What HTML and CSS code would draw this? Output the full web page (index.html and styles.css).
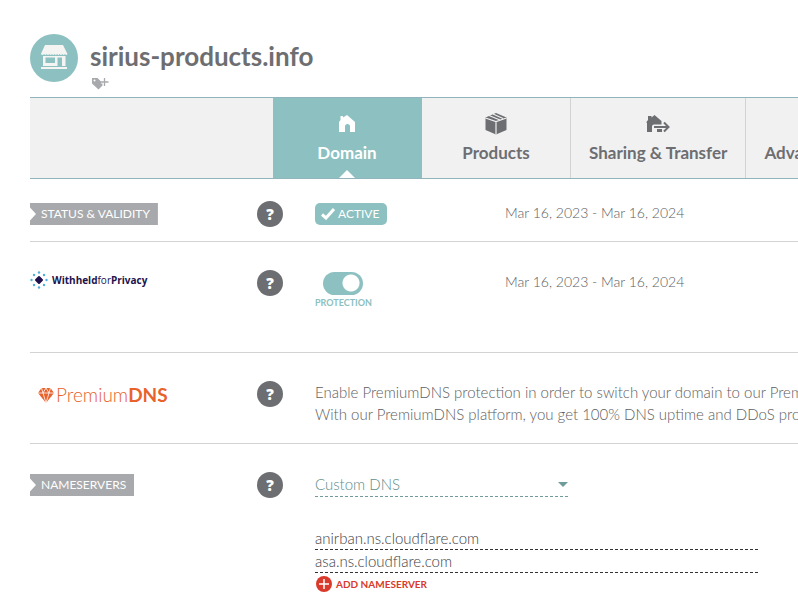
FILE: index.html
```html
<!DOCTYPE html>
<html lang="en">
<head>
  <meta charset="utf-8">
  <title>sirius-products.info</title>
  <link rel="stylesheet" href="styles.css">
</head>
<body>
  <div class="page">
    <header class="domain-header">
      <svg class="store" viewBox="0 0 48 48" width="48" height="48">
        <circle cx="24" cy="24" r="24" fill="#8dc0c0"/>
        <path fill="#f4f4f2" d="M15 11h18l4.500 9q-1.300 2-2.600 0-1.300 2-2.600 0-1.300 2-2.600 0-1.300 2-2.600 0-1.300 2-2.600 0-1.300 2-2.600 0-1.300 2-2.600 0-1.300 2-2.600 0-1.300 2-2.600 0-1.300 2-3.200 0z"/>
        <path fill="#f4f4f2" fill-rule="evenodd" d="M13 22h22.500v10H13zM15.500 23.500v5.500H25v-5.500zM27.500 23.500V32H32v-8.500z"/>
        <path fill="#f4f4f2" d="M11 33h26v2H11z"/>
      </svg>
      <div>
        <h1>sirius-products.info</h1>
        <button class="tag-button" type="button" aria-label="Add tag">
          <svg viewBox="0 0 17 12" width="17" height="12">
            <path fill="#a7a9ac" fill-rule="evenodd" d="M0 0h5.500L10.500 5v2.500l-4 4L0 5.500zM2.500 1.500a1 1 0 1 0 0 2 1 1 0 1 0 0-2z"/>
            <path stroke="#fff" stroke-width="3" d="M12.500 0v8M9 4h7"/>
            <path stroke="#a7a9ac" stroke-width="1.300" d="M12.500 0v8M8.500 4H16.500"/>
          </svg>
        </button>
      </div>
    </header>

    <nav class="tabs">
      <a class="tab active" href="#domain">
        <svg viewBox="0 0 24 24" width="24" height="24"><path fill="#fff" d="M4 20V10l1.500-2V4H8v1.500L12 3l8 7v10h-5v-5.500q0-2.500-2.500-2.500T10 14.500V20z"/></svg>
        Domain
      </a>
      <a class="tab" href="#products">
        <svg viewBox="0 0 24 24" width="24" height="24">
          <path fill="#6d6e71" d="M1.500 5.500L12 1l10.500 4.500v12.500L12 22.500 1.500 18z"/>
          <path fill="none" stroke="#f1f1f1" stroke-width="1.200" d="M1.500 6L12 9.500 22.500 6M12 9.500v13M5 3.500l11 4.500M9 2l10 4.500"/>
        </svg>
        Products
      </a>
      <a class="tab" href="#sharing-transfer">
        <svg viewBox="0 0 24 24" width="24" height="24">
          <path fill="#6d6e71" d="M1 20V10.500H0L2 8V4h3.500v1.500L8.500 3l7 6v3.500H8q-2 0-2 2V20zM11 17h5v3h-5z"/>
          <path fill="none" stroke="#6d6e71" stroke-width="2" d="M8 15h14.500M18 10.500l4.500 4.500-4.500 4.500"/>
        </svg>
        Sharing &amp; Transfer
      </a>
      <a class="tab" href="#advanced-dns">
        <svg viewBox="0 0 24 24" width="24" height="24"><path fill="#6d6e71" d="M3 4h18v5H3zM3 10h18v5H3zM3 16h18v5H3z"/></svg>
        Advanced DNS
      </a>
    </nav>

    <main>
      <section class="row status">
        <h2 class="ribbon">STATUS &amp; VALIDITY</h2>
        <button class="help" type="button" aria-label="Help">?</button>
        <div class="details">
          <span class="badge">
            <svg viewBox="0 0 14 12" width="14" height="12"><path fill="none" stroke="#fff" stroke-width="3" d="M1 6.500l4 3.500L13 1"/></svg>
            ACTIVE
          </span>
          <span class="dates">Mar 16, 2023 - Mar 16, 2024</span>
        </div>
      </section>

      <section class="row privacy">
        <div class="privacy-logo">
          <svg viewBox="0 0 18 18" width="18" height="18">
            <path fill="#21124d" d="M9 6l3 3-3 3-3-3z" stroke="#21124d" stroke-width="2" stroke-linejoin="round"/>
            <g fill="#4fb0e0">
              <circle cx="9" cy="1.500" r="1.200"/><circle cx="14" cy="4" r="1.200"/>
              <circle cx="16.500" cy="9" r="1.200"/><circle cx="14" cy="14" r="1.200"/>
              <circle cx="9" cy="16.500" r="1.200"/><circle cx="4" cy="14" r="1.200"/>
              <circle cx="1.500" cy="9" r="1.200"/><circle cx="4" cy="4" r="1.200"/>
            </g>
          </svg>
          <span><b>Withheld</b>for<b>Privacy</b></span>
        </div>
        <button class="help" type="button" aria-label="Help">?</button>
        <div class="details">
          <label class="toggle">
            <input type="checkbox" checked>
            PROTECTION
          </label>
          <span class="dates">Mar 16, 2023 - Mar 16, 2024</span>
        </div>
      </section>

      <section class="row premium">
        <div class="premium-logo">
          <svg viewBox="0 0 16 15" width="16" height="15">
            <path fill="#e8622c" d="M3.500 0h9L16 5l-8 10L0 5z"/>
            <path fill="none" stroke="#fff" stroke-width="0.800" d="M0 5h16M3.500 0L5 5l3 10 3-10 1.500-5M5 5l3-5 3 5"/>
          </svg>
          <span>Premium<b>DNS</b></span>
        </div>
        <button class="help" type="button" aria-label="Help">?</button>
        <p>Enable PremiumDNS protection in order to switch your domain to our PremiumDNS platform.<br>
        With our PremiumDNS platform, you get 100% DNS uptime and DDoS protection at the DNS level.</p>
      </section>

      <section class="row nameservers">
        <h2 class="ribbon">NAMESERVERS</h2>
        <button class="help" type="button" aria-label="Help">?</button>
        <form>
          <div class="select">
            <select aria-label="Nameserver type">
              <option>Custom DNS</option>
            </select>
            <svg viewBox="0 0 10 5" width="10" height="5"><path fill="#6f9c9a" d="M0 0h10L5 5z"/></svg>
          </div>
          <input class="server" type="text" value="anirban.ns.cloudflare.com" aria-label="Nameserver 1">
          <input class="server" type="text" value="asa.ns.cloudflare.com" aria-label="Nameserver 2">
          <button class="add" type="button">
            <svg viewBox="0 0 16 16" width="16" height="16">
              <circle cx="8" cy="8" r="8" fill="#d93a2b"/>
              <path stroke="#fff" stroke-width="1.500" d="M8 3v10M3 8h10"/>
            </svg>
            ADD NAMESERVER
          </button>
        </form>
      </section>
    </main>
  </div>
</body>
</html>
```
FILE: styles.css
```css
* {
  box-sizing: border-box;
}

body {
  margin: 0;
  background: #fff;
  color: #5d5e61;
  font-family: Lato, sans-serif;
  font-size: 15px;
  font-weight: 300;
  line-height: 22px;
  overflow: hidden;
}

button,
input,
select {
  font-family: inherit;
  font-weight: inherit;
}

button {
  border: 0;
  padding: 0;
  background: none;
  cursor: pointer;
}

b {
  font-weight: bold;
}

svg {
  display: block;
  flex: none;
}

.page {
  padding: 34px 0 0 30px;
}

/* header */
.domain-header {
  display: flex;
  gap: 12px;
  height: 63px;
}

.domain-header h1 {
  margin: 6px 0;
  color: #6d6e71;
  font-size: 26px;
  line-height: 32px;
}

.tag-button {
  display: block;
  padding-left: 2px;
}

/* tabs */
.tabs {
  display: flex;
  height: 82px;
  padding-left: 243px;
  overflow: hidden;
  background: #f1f1f1;
  border-top: 1px solid #8fb5bb;
  border-bottom: 1px solid #8fb5bb;
}

.tab {
  position: relative;
  display: flex;
  flex: none;
  flex-direction: column;
  align-items: center;
  gap: 6px;
  min-width: 149px;
  padding: 14px 18px 0;
  border-right: 1px solid #d3d3d3;
  color: #6d6e71;
  font-size: 17px;
  font-weight: bold;
  text-decoration: none;
  white-space: nowrap;
}

.tab.active {
  background: #8dc0c0;
  border-color: #8dc0c0;
  color: #fff;
}

.tab.active::after {
  content: '';
  position: absolute;
  bottom: 0;
  left: 50%;
  margin-left: -8px;
  border: 8px solid transparent;
  border-top: 0;
  border-bottom-color: #fff;
}

/* rows */
.row {
  display: grid;
  grid-template-columns: 227px 58px 1fr;
  align-items: start;
  padding: 28px 0;
  border-bottom: 1px solid #d3d3d3;
}

.row.status {
  padding: 22px 0 14px;
}

.row.privacy {
  padding-bottom: 43px;
}

.row.premium {
  padding-bottom: 18px;
}

.row.nameservers {
  border: 0;
}

.details {
  display: grid;
  grid-template-columns: 190px 1fr;
  align-items: start;
  line-height: 24px;
}

.ribbon {
  justify-self: start;
  margin: 2px 0;
  padding: 0 8px 0 11px;
  background: #a7a9ac;
  clip-path: polygon(0 0, 100% 0, 100% 100%, 0 100%, 0 80%, 6px 50%, 0 20%);
  color: #fff;
  font-size: 12px;
  font-weight: normal;
}

.help {
  width: 26px;
  height: 26px;
  border-radius: 50%;
  background: #6d6e71;
  color: #fff;
  font-family: "Open Sans", sans-serif;
  font-size: 15px;
  font-weight: 800;
}

.badge {
  display: flex;
  justify-self: start;
  align-items: center;
  gap: 3px;
  margin-top: 2px;
  padding: 0 8px 0 6px;
  border-radius: 5px;
  background: #8dc0c0;
  color: #fff;
  font-size: 12px;
  font-weight: normal;
  line-height: 22px;
}

.toggle {
  display: flex;
  flex-direction: column;
  justify-self: start;
  align-items: center;
  gap: 2px;
  margin-top: 2px;
  color: #8dc0c0;
  font-size: 9px;
  font-weight: bold;
  line-height: 12px;
}

.toggle input {
  appearance: none;
  width: 40px;
  height: 23px;
  margin: 0;
  border-radius: 12px;
  background: #8dc0c0 radial-gradient(circle at 28px 11px, #fff 8px, transparent 9px);
}

.dates {
  font-size: 14px;
}

.privacy-logo {
  display: flex;
  align-items: center;
  gap: 4px;
  color: #21124d;
  font-family: "Open Sans", sans-serif;
  font-size: 10px;
  font-weight: normal;
  line-height: 20px;
}

.premium-logo {
  display: flex;
  align-items: center;
  gap: 2px;
  padding: 3px 0 0 8px;
  color: #e8622c;
  font-size: 19px;
}

.row p {
  margin: 0;
  white-space: nowrap;
}

/* nameservers form */
.select {
  display: flex;
  align-items: center;
  width: 253px;
  height: 25px;
  margin-bottom: 30px;
  border-bottom: 1px dashed #6f9c9a;
}

.select select {
  appearance: none;
  flex: 1;
  margin-right: -10px;
  padding: 0;
  border: 0;
  background: none;
  color: #5d8c8a;
  font-size: 15px;
}

.server {
  display: block;
  width: 443px;
  height: 23px;
  padding: 0;
  border: 0;
  border-bottom: 1px dashed #333;
  color: #404144;
  font-size: 15px;
}

.add {
  display: flex;
  align-items: center;
  gap: 4px;
  margin-top: 3px;
  padding-left: 1px;
  color: #d93a2b;
  font-size: 10px;
  font-weight: bold;
}
```
